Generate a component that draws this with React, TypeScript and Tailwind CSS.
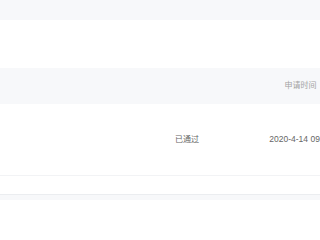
const FONT = "font-['Liberation_Sans','Noto_Sans_CJK_SC',sans-serif]";

export default function App() {
  return (
    <div className={`w-[320px] h-[200px] overflow-hidden bg-white ${FONT}`}>
      <div className="h-5 bg-[#f7f8fa]" />
      <div className="h-12 bg-white" />

      {/* table head */}
      <div className="flex h-9 items-center bg-[#f7f8fa] text-[8px] text-[#a3a3a3] whitespace-nowrap">
        <div className="w-[137px] shrink-0" />
        <div className="w-[100px] shrink-0" />
        <div className="w-[127px] shrink-0 text-center">申请时间</div>
      </div>

      {/* table row */}
      <div className="flex h-[72px] items-center border-b border-[#f2f3f5] text-[8px] text-[#666] whitespace-nowrap">
        <div className="w-[137px] shrink-0" />
        <div className="w-[100px] shrink-0 text-center">已通过</div>
        <div className="w-[127px] shrink-0 text-center text-[8.5px]">2020-4-14 09:30</div>
      </div>

      <div className="h-[19px] border-b border-[#ebedf0] bg-white" />
      <div className="h-10 bg-[#f7f8fa]" />
    </div>
  );
}
